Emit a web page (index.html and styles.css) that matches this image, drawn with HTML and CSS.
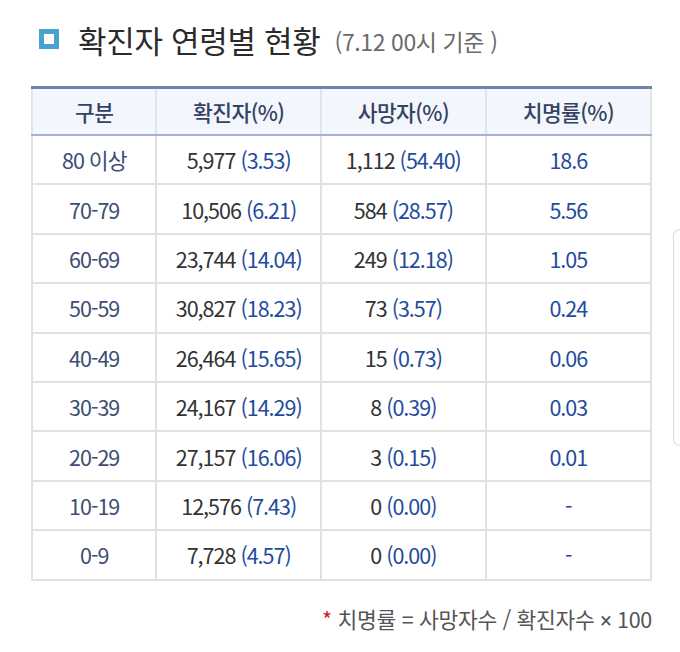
FILE: index.html
```html
<!DOCTYPE html>
<html lang="ko">
<head>
<meta charset="utf-8">
<link rel="stylesheet" href="styles.css">
</head>
<body>
<div class="page">
  <h1 class="title">
    <span class="title-icon"></span>
    <span class="title-main">확진자 연령별 현황</span>
    <span class="title-sub">(7.12 00시 기준 )</span>
  </h1>
  <table class="stats">
    <colgroup>
      <col class="c1"><col class="c2"><col class="c3"><col class="c4">
    </colgroup>
    <thead>
      <tr><th>구분</th><th>확진자(%)</th><th>사망자(%)</th><th>치명률(%)</th></tr>
    </thead>
    <tbody>
      <tr><td class="age">80 이상</td><td>5,977 <span class="pct">(3.53)</span></td><td>1,112 <span class="pct">(54.40)</span></td><td class="rate">18.6</td></tr>
      <tr><td class="age">70-79</td><td>10,506 <span class="pct">(6.21)</span></td><td>584 <span class="pct">(28.57)</span></td><td class="rate">5.56</td></tr>
      <tr><td class="age">60-69</td><td>23,744 <span class="pct">(14.04)</span></td><td>249 <span class="pct">(12.18)</span></td><td class="rate">1.05</td></tr>
      <tr><td class="age">50-59</td><td>30,827 <span class="pct">(18.23)</span></td><td>73 <span class="pct">(3.57)</span></td><td class="rate">0.24</td></tr>
      <tr><td class="age">40-49</td><td>26,464 <span class="pct">(15.65)</span></td><td>15 <span class="pct">(0.73)</span></td><td class="rate">0.06</td></tr>
      <tr><td class="age">30-39</td><td>24,167 <span class="pct">(14.29)</span></td><td>8 <span class="pct">(0.39)</span></td><td class="rate">0.03</td></tr>
      <tr><td class="age">20-29</td><td>27,157 <span class="pct">(16.06)</span></td><td>3 <span class="pct">(0.15)</span></td><td class="rate">0.01</td></tr>
      <tr><td class="age">10-19</td><td>12,576 <span class="pct">(7.43)</span></td><td>0 <span class="pct">(0.00)</span></td><td class="rate">-</td></tr>
      <tr><td class="age">0-9</td><td>7,728 <span class="pct">(4.57)</span></td><td>0 <span class="pct">(0.00)</span></td><td class="rate">-</td></tr>
    </tbody>
  </table>
  <p class="note"><span class="star">*</span> 치명률 = 사망자수 / 확진자수 <span class="times">×</span> 100</p>
  <div class="side-box"></div>
</div>
</body>
</html>
```
FILE: styles.css
```css
html, body {
  margin: 0;
  padding: 0;
  background: #ffffff;
}
body {
  font-family: "Noto Sans CJK KR", "Noto Sans", sans-serif;
  width: 680px;
  height: 652px;
  overflow: hidden;
}
.page {
  position: relative;
  width: 680px;
  height: 652px;
  box-sizing: border-box;
  padding: 17px 0 0 31px;
  overflow: hidden;
}
.title {
  display: flex;
  align-items: center;
  margin: 0;
  height: 44px;
  font-weight: 400;
}
.title-icon {
  width: 10px;
  height: 10px;
  border: 5px solid #48a2cf;
  background: #fff;
  margin-left: 8px;
  margin-right: 19px;
  flex: none;
}
.title-main {
  font-size: 31px;
  color: #2b2b2b;
  letter-spacing: -0.3px;
}
.title-sub {
  font-size: 23px;
  color: #6b6b6b;
  margin-left: 14px;
  letter-spacing: -0.4px;
  padding-top: 4px;
}
.stats {
  margin-top: 25px;
  width: 621px;
  border-collapse: collapse;
  table-layout: fixed;
  border-top: 3px solid #6f82a9;
}
.c1 { width: 20.1%; }
.c2 { width: 26.6%; }
.c3 { width: 26.6%; }
.c4 { width: 26.7%; }
.stats th, .stats td {
  text-align: center;
  font-size: 21.5px;
  letter-spacing: -1px;
  padding: 0;
  border: 2px solid #e1e1e1;
}
.stats th {
  height: 45px;
  background: #f3f6fc;
  color: #344362;
  font-weight: 500;
  letter-spacing: -0.6px;
  border-bottom: 2px solid #a7b3cc;
  border-left-color: #dfe3ec;
  border-right-color: #dfe3ec;
}
.stats td {
  height: 47.4px;
  color: #333333;
}
.stats .age { color: #3c4e74; }
.stats .pct { color: #1f4c9e; }
.stats .rate { color: #1f4c9e; }
.note {
  margin: 22px 0 0 0;
  width: 621px;
  text-align: right;
  font-size: 21.5px;
  color: #555555;
  letter-spacing: -0.3px;
}
.times {
  font-family: "Roboto", "Noto Sans", sans-serif;
}
.star { color: #d0212a; }
.side-box {
  position: absolute;
  left: 673px;
  top: 229px;
  width: 6px;
  height: 215px;
  border: 1px solid #dadada;
  border-right: none;
  border-radius: 10px 0 0 10px;
}
```
